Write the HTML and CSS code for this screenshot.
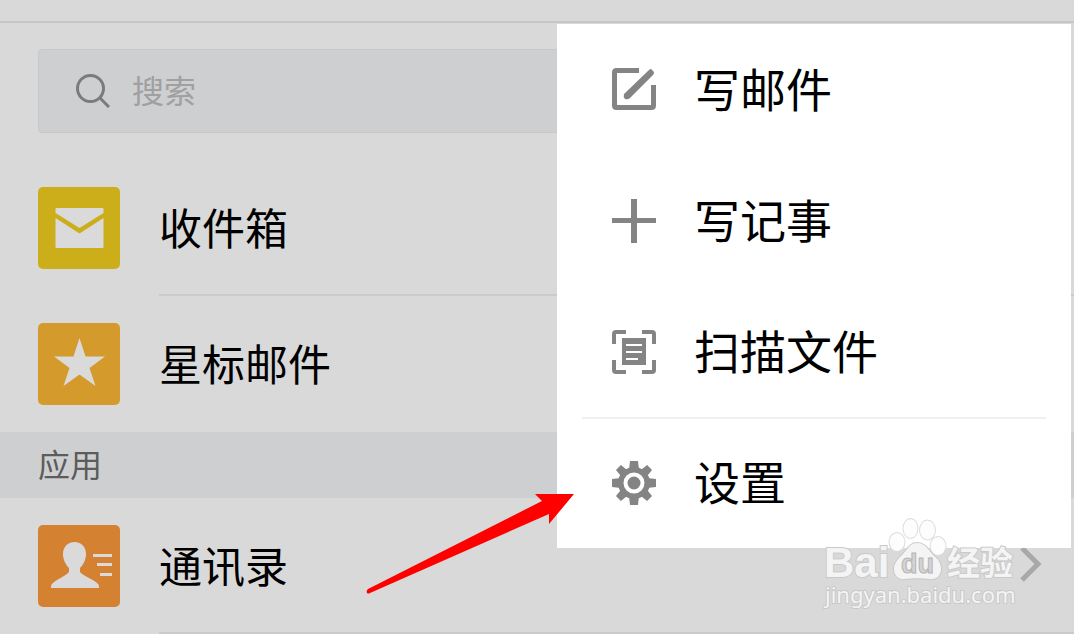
FILE: index.html
```html
<!DOCTYPE html>
<html lang="zh-CN">
<head>
    <meta charset="UTF-8">
    <meta name="viewport" content="width=device-width, initial-scale=1.0">
    <title>邮箱</title>
    <link rel="stylesheet" href="styles.css">
</head>
<body>

    <header class="topbar"></header>

    <main>
      <form class="search-form">
        <label class="search-box" for="search">
          <svg class="search-icon" viewBox="0 0 34 34">
            <circle cx="14.5" cy="14.5" r="13"/>
            <path d="M24 24l9 9"/>
          </svg>
          <input type="search" id="search" name="search" placeholder="搜索" aria-label="搜索">
        </label>
      </form>

      <a class="row" href="#inbox">
        <svg class="row-icon inbox" viewBox="0 0 82 82">
          <path d="M17.5 22q0-1 1-1h46q1 0 1 1v4L41.5 41 17.5 26z"/>
          <path d="M17.5 31l24 15.500 24-15.500v29q0 1-1 1h-46q-1 0-1-1z"/>
        </svg>
        <span class="row-text">收件箱</span>
      </a>

      <a class="row" href="#starred">
        <svg class="row-icon starred" viewBox="0 0 82 82">
          <path d="M41.5 15l6 18.500H67L51.5 45l6 18-16-11.500L25.5 63l6-18L16 33.500h19.500z"/>
        </svg>
        <span class="row-text last">星标邮件</span>
      </a>

      <h2 class="section">应用</h2>

      <a class="row" href="#contacts">
        <svg class="row-icon contacts" viewBox="0 0 82 82">
          <path d="M36.5 17c7 0 11.500 5 11.500 12 0 6-3 11-6 14v4c3 4 15 8 18 12 1 1 1 2 1 4H13c0-2 0-3 1-4 3-4 14-8 17-12v-4c-3-3-6-8-6-14 0-7 4.500-12 11.500-12z"/>
          <path d="M55 29h19v3H55zM59 38h15v3H59zM62 48h12v3H62z"/>
        </svg>
        <span class="row-text">通讯录
          <svg class="chevron" viewBox="0 0 22 36"><path d="M2 2l16 16L2 34"/></svg>
        </span>
      </a>
    </main>

    <nav class="menu">
      <a class="menu-item" href="#compose">
        <svg viewBox="0 0 44 44">
          <path class="line" d="M27 2.500H4.500q-2 0-2 2v33q0 2 2 2h35q2 0 2-2V17"/>
          <path d="M37 2q2-2 3 0l2 2q0 2-1 3L18 30q-2 2-5 1-2-2-1-5z"/>
        </svg>
        <span>写邮件</span>
      </a>
      <a class="menu-item" href="#note">
        <svg viewBox="0 0 44 44">
          <path d="M19 0h6v19h19v5H25v20h-6V24H0v-5h19z"/>
        </svg>
        <span>写记事</span>
      </a>
      <a class="menu-item" href="#scan">
        <svg viewBox="0 0 44 44">
          <path class="bracket" d="M2 14V4q0-2 2-2h10M30 2h10q2 0 2 2v10M42 30v10q0 2-2 2H30M14 42H4q-2 0-2-2V30"/>
          <path d="M10 8h24v27H10z"/>
          <path class="rule" d="M14 15h16M14 22h16M14 29h12"/>
        </svg>
        <span>扫描文件</span>
      </a>
      <hr>
      <a class="menu-item" href="#settings">
        <svg viewBox="0 0 44 44">
          <path d="M18 0h8l1 9H17zM18 44h8l1-9H17zM0 18v8l9 1V17zM44 18v8l-9 1V17z"/>
          <path transform="rotate(45 22 22)" d="M18.5 0h7l1 9h-9zM18.5 44h7l1-9h-9zM0 18.500v7l9 1v-9zM44 18.500v7l-9 1v-9z"/>
          <circle cx="22" cy="22" r="16"/>
          <circle class="hole" cx="22" cy="22" r="8.500"/>
        </svg>
        <span>设置</span>
      </a>
    </nav>

    <svg class="arrow" viewBox="0 0 210 104">
      <path d="M208 2h-39l7 7L2 97q-2 2-1 4 1 1 3 0L183 22v10z"/>
    </svg>

    <svg class="watermark" viewBox="0 0 200 100">
      <g class="mark">
        <g class="toes">
          <ellipse cx="77" cy="28" rx="7.500" ry="9"/>
          <ellipse cx="90.500" cy="14.500" rx="7" ry="9.500"/>
          <ellipse cx="107.500" cy="16" rx="7.500" ry="9.500"/>
          <ellipse cx="118" cy="32" rx="7.500" ry="9"/>
        </g>
        <path d="M97 29c9 0 12 8 17 13 5 4 7 8 7 13 0 8-6 11-12 10-5-1-19-1-24 0-6 1-11-3-11-10 0-5 3-9 7-13 6-5 8-13 16-13z"/>
        <text class="bai" x="4" y="63">Bai</text>
        <text class="jing" x="127" y="61">经验</text>
        <text class="url" x="5" y="89">jingyan.baidu.com</text>
      </g>
      <text class="du" x="81" y="59">du</text>
    </svg>

</body>
</html>
```

FILE: styles.css
```css
* {
  box-sizing: border-box;
}

body {
  margin: 0;
  position: relative;
  background-color: #d9d9d9;
  color: #000;
  font-family: "Noto Sans CJK SC", sans-serif;
}

a {
  color: inherit;
  text-decoration: none;
}

.topbar {
  height: 23px;
  border-bottom: 2px solid #c6c6c6;
}

/* search */
.search-form {
  padding: 26px 38px 27px;
}

.search-box {
  display: flex;
  align-items: center;
  gap: 22px;
  height: 84px;
  padding: 0 37px;
  border: 1px solid #c5c7c9;
  border-radius: 4px;
  background-color: #cecfd1;
}

.search-icon {
  width: 34px;
  height: 34px;
  fill: none;
  stroke: #7b7b7b;
  stroke-width: 3;
}

.search-box input {
  flex: 1;
  padding: 0 0 4px;
  border: none;
  outline: none;
  background: none;
  font-family: inherit;
  font-size: 32px;
}

.search-box input::placeholder {
  color: #a0a0a0;
}

/* mailbox rows */
.row {
  display: flex;
  gap: 39px;
  height: 136px;
  padding-left: 38px;
}

.row-icon {
  flex: none;
  width: 82px;
  height: 82px;
  margin-top: 27px;
  border-radius: 5px;
  fill: #dadada;
}

.inbox {
  background-color: #ccae1b;
}

.starred {
  background-color: #d49b2c;
}

.contacts {
  background-color: #d48232;
}

.row-text {
  flex: 1;
  display: flex;
  align-items: center;
  justify-content: space-between;
  padding: 0 32px 2px 0;
  border-bottom: 2px solid #cbcbcb;
  font-size: 43px;
}

.row-text.last {
  border-color: transparent;
}

.chevron {
  width: 22px;
  height: 36px;
  fill: none;
  stroke: #a8a8ab;
  stroke-width: 5;
}

.section {
  height: 66px;
  margin: 0;
  padding: 0 38px;
  background-color: #cecfd1;
  color: #5c5c5c;
  font-size: 32px;
  font-weight: normal;
  line-height: 62px;
}

/* popup menu */
.menu {
  position: absolute;
  top: 24px;
  right: 3px;
  width: 514px;
  background-color: #fff;
}

.menu-item {
  display: flex;
  align-items: center;
  gap: 38px;
  height: 131px;
  padding-left: 55px;
  font-size: 46px;
}

.menu-item span {
  padding-bottom: 6px;
}

.menu-item svg {
  width: 44px;
  height: 44px;
  fill: #848484;
}

.menu-item .line,
.menu-item .bracket {
  fill: none;
  stroke: #848484;
  stroke-width: 5;
}

.menu-item .bracket {
  stroke-width: 4;
}

.menu-item .rule {
  stroke: #fff;
  stroke-width: 2;
}

.menu-item .hole {
  stroke: #fff;
  stroke-width: 4;
}

.menu hr {
  height: 2px;
  margin: 0 25px -2px;
  border: none;
  background-color: #efefef;
}

/* things drawn over the page */
.arrow {
  position: absolute;
  top: 492px;
  left: 366px;
  width: 210px;
  height: 104px;
  fill: #f00;
}

.watermark {
  position: absolute;
  top: 514px;
  right: 54px;
  width: 200px;
  height: 100px;
}

.mark {
  fill: #f4f4f4;
  stroke: #c9c9c9;
  stroke-width: 2;
  paint-order: stroke;
}

.toes {
  fill: #fdfdfd;
  stroke: #dcdcdc;
}

.bai {
  font: bold 42px "Liberation Sans", sans-serif;
}

.jing {
  font-size: 33px;
  font-weight: bold;
}

.url {
  font: 22px "Noto Sans", sans-serif;
}

.du {
  fill: #d4d4d4;
  stroke: #b4b4b4;
  font: bold 27px "Liberation Sans", sans-serif;
}
```
